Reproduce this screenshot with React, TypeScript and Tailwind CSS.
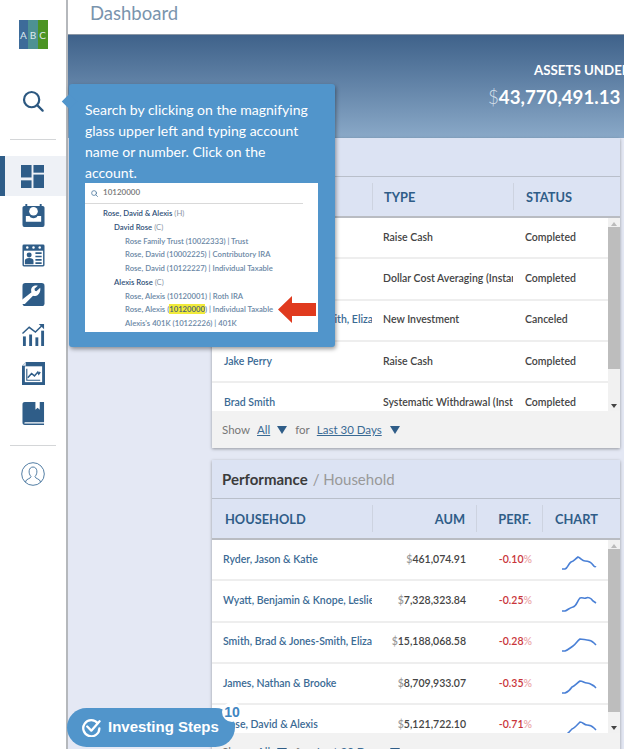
import React from 'react';

const navy = '#2f5d88';

const SearchIcon = ({ className }: { className?: string }) => (
  <svg viewBox="0 0 24 24" className={className} fill="none" stroke="currentColor" strokeWidth="2.4" strokeLinecap="round">
    <circle cx="10.5" cy="10.5" r="8.3" />
    <path d="M16.8 16.8L22.5 22.5" />
  </svg>
);

const Logo = () => (
  <div className="flex w-[29px] h-[29px] text-[10px] leading-[31px] text-center text-[#dfe9ee]">
    <div className="flex-1 bg-[#3d6b99]">A</div>
    <div className="flex-1 bg-[#4d9193]">B</div>
    <div className="flex-1 bg-[#4c9424]">C</div>
  </div>
);

const DashIcon = () => (
  <svg width="23" height="23" viewBox="0 0 24 24" fill={navy}>
    <rect x="0" y="0" width="11" height="13" />
    <rect x="0" y="16" width="11" height="8" />
    <rect x="13" y="0" width="11" height="8" />
    <rect x="13" y="10" width="11" height="14" />
  </svg>
);

const CalendarIcon = () => (
  <svg width="23" height="23" viewBox="0 0 24 24">
    <rect x="0.5" y="2" width="23" height="22" rx="2" fill={navy} />
    <rect x="3.5" y="0" width="2" height="4" fill={navy} />
    <rect x="18.5" y="0" width="2" height="4" fill={navy} />
    <circle cx="12" cy="7.5" r="4.5" fill="#fff" />
    <path d="M4 12.5h4c0 3 8 3 8 0h4v6H4z" fill="#fff" />
  </svg>
);

const ContactIcon = () => (
  <svg width="23" height="23" viewBox="0 0 24 24">
    <rect x="0.5" y="0.5" width="23" height="23" rx="1.5" fill={navy} />
    <circle cx="5.5" cy="3.6" r="1.3" fill="#fff" />
    <circle cx="12" cy="3.6" r="1.3" fill="#fff" />
    <circle cx="18.5" cy="3.6" r="1.3" fill="#fff" />
    <rect x="2" y="7" width="20" height="15" fill="#fff" />
    <circle cx="7.5" cy="11.5" r="2.6" fill={navy} />
    <path d="M3 21v-3.5c0-2 2-3 4.5-3s4.5 1 4.5 3V21z" fill={navy} />
    <path d="M14 9.5h6.5M14 13h6.5M14 16.5h6.5M14 20h6.5" stroke={navy} strokeWidth="1.7" />
  </svg>
);

const WrenchIcon = () => (
  <svg width="23" height="23" viewBox="0 0 24 24">
    <rect x="0.5" y="0" width="23" height="24" rx="3" fill={navy} />
    <path d="M19 5l-4 3.5-1.5-.5-.5-2 3.5-3.2c-3.5-1-7 1-7 4.7 0 1 .2 1.5.4 2.2L0 17.5 0 22l3 0 8.5-8.7c.8.3 1.5.4 2.3.3 3.5-.3 6-4.5 5.2-8.6z" fill="#fff" />
  </svg>
);

const GrowthIcon = () => (
  <svg width="23" height="23" viewBox="0 0 24 24" fill={navy}>
    <rect x="1" y="14" width="3" height="10" />
    <rect x="7.5" y="12" width="3" height="12" />
    <rect x="14" y="15" width="3" height="9" />
    <rect x="20" y="8" width="3" height="16" />
    <path d="M0.5 11L7.5 4.5l6.5 5L21 2.5" fill="none" stroke={navy} strokeWidth="1.5" />
    <path d="M17.5 1H23v5.5z" />
  </svg>
);

const ImageChartIcon = () => (
  <svg width="23" height="23" viewBox="0 0 24 24">
    <path d="M4 0h20v24H0V4z" fill={navy} />
    <rect x="3" y="4.5" width="18" height="16.5" fill="#fff" />
    <path d="M5 7v12h14" fill="none" stroke={navy} strokeWidth="1.2" />
    <path d="M6 16.5l4-4.500 3 2.500 3.500-4 1 2 1.500-2" fill="none" stroke={navy} strokeWidth="1.6" />
    <path d="M4 0v4H0z" fill="#dfe6ee" />
  </svg>
);

const BookIcon = () => (
  <svg width="23" height="23" viewBox="0 0 24 24" fill={navy}>
    <path d="M3 0h20v21H3.5c-1.500 0-1.500 1.500 0 1.500H23V24H3c-1.800 0-2.500-1-2.500-2.500V3C.5 1 1 0 3 0z" />
    <path d="M14 0h4.500v8l-2.200-2L14 8z" fill="#fff" />
  </svg>
);

const UserIcon = () => (
  <svg width="24" height="24" viewBox="0 0 24 24" fill="none" stroke="#3f6f9a" strokeWidth="0.9">
    <circle cx="12" cy="12" r="11.3" />
    <path d="M4.500 20c.2-3.500 5.500-3 5.500-5.500-3-3-2.500-9.500 2-9.500s5 6.500 2 9.500c0 2.500 5.300 2 5.500 5.500" />
  </svg>
);

const navItems = [
  <CalendarIcon key="calendar" />,
  <ContactIcon key="contact" />,
  <WrenchIcon key="wrench" />,
  <GrowthIcon key="growth" />,
  <ImageChartIcon key="image" />,
  <BookIcon key="book" />,
];

const Sidebar = () => (
  <aside className="w-[68px] shrink-0 h-full bg-white border-r-2 border-[#b5b8bc] flex flex-col items-center pt-5">
    <Logo />
    <SearchIcon className="w-[22px] h-[22px] text-[#2c5880] mt-[41px]" />
    <div className="w-[46px] h-px bg-[#d4d6d8] mt-[27px]" />
    <div className="w-full h-10 mt-[16px] flex items-center bg-[#eef1f6]">
      <div className="w-[5px] h-full bg-[#2f5d88]" />
      <div className="ml-[16px]"><DashIcon /></div>
    </div>
    <div className="flex flex-col gap-[16.5px] mt-[8px]">{navItems}</div>
    <div className="w-[46px] h-px bg-[#d4d6d8] mt-[20px]" />
    <div className="mt-[16px]"><UserIcon /></div>
  </aside>
);

const Caret = () => (
  <svg width="10" height="8" viewBox="0 0 10 8"><path d="M0 0h10L5 8z" fill={navy} /></svg>
);

const Footer = () => (
  <div className="h-[37px] bg-[#f2f2f2] flex items-center pl-[10px] pt-[1px] text-[11.5px] text-[#777]">
    Show
    <span className="ml-[7px] text-[#3a6a94] underline">All</span>
    <span className="ml-[7px]"><Caret /></span>
    <span className="ml-[8px]">for</span>
    <span className="ml-[7px] text-[#3a6a94] underline">Last 30 Days</span>
    <span className="ml-[8px]"><Caret /></span>
  </div>
);

const Scrollbar = ({ top, height }: { top: number; height: number }) => (
  <div className="w-3 shrink-0 bg-[#f1f1f1] flex flex-col items-center relative">
    <svg width="6" height="4" viewBox="0 0 6 4" className="mt-1"><path d="M0 4h6L3 0z" fill="#bbb" /></svg>
    <div className="w-full bg-[#bdbdbd] absolute" style={{ top, height }} />
    <svg width="6" height="4" viewBox="0 0 6 4" className="absolute bottom-[3px]"><path d="M0 0h6L3 4z" fill="#444" /></svg>
  </div>
);

const activity = [
  ['Nathan Ryder', 'Raise Cash', 'Completed'],
  ['Leslie Wyatt', 'Dollar Cost Averaging (Instant)', 'Completed'],
  ['Smith, Brad & Jones-Smith, Eliza', 'New Investment', 'Canceled'],
  ['Jake Perry', 'Raise Cash', 'Completed'],
  ['Brad Smith', 'Systematic Withdrawal (Instant)', 'Completed'],
];

const ActivityCard = () => (
  <section className="bg-white shadow-[0_1px_3px_rgba(0,0,0,0.35)] overflow-hidden">
    <div className="h-[39px] bg-[#dce3f3] border-b border-[#b9bfca] px-[10px] flex items-center text-[15.5px] font-bold text-[#3b3b3b]">Activity</div>
    <div className="h-[41px] bg-[#dce3f3] border-b-2 border-[#b9bcc2] flex items-center text-[12.8px] font-bold text-[#2f5d88]">
      <div className="w-[160px] pl-[12px] pt-[2px]">NAME</div>
      <div className="w-[141px] pl-[11px] pt-[2px] h-[27px] flex items-center border-l border-[#cdd3e0]">TYPE</div>
      <div className="flex-1 pl-[12px] pt-[2px] h-[27px] flex items-center border-l border-[#cdd3e0]">STATUS</div>
    </div>
    <div className="flex h-[193px]">
      <div className="flex-1 min-w-0 overflow-hidden">
        {activity.map((row) => (
          <div key={row[0]} className="h-[41.3px] shrink-0 border-b-2 border-[#eeeeee] flex items-center text-[10.5px] font-semibold whitespace-nowrap">
            <div className="w-[160px] pl-[12px] overflow-hidden text-[#3a6a94]">{row[0]}</div>
            <div className="w-[141px] pl-[11px] overflow-hidden text-[#444]">{row[1]}</div>
            <div className="flex-1 pl-[12px] text-[#444]">{row[2]}</div>
          </div>
        ))}
      </div>
      <Scrollbar top={9} height={142} />
    </div>
    <Footer />
  </section>
);

const performance = [
  { name: 'Ryder, Jason & Katie', aum: '461,074.91', perf: '-0.10', line: 'M0 14h3c3-1 3-5 6-7 3-1 4-3 7-5 3 1 4 4 7 4s6 1 8 4 2 1 3 2' },
  { name: 'Wyatt, Benjamin & Knope, Leslie', aum: '7,328,323.84', perf: '-0.25', line: 'M0 15h3c3-1 4-3 8-4s4-6 7-9c3-1 4 1 6 0s5 0 7 3l3 2' },
  { name: 'Smith, Brad & Jones-Smith, Eliza', aum: '15,188,068.58', perf: '-0.28', line: 'M0 14h3c3-1 5-3 8-5 3-2 4-5 7-7 3 0 5 1 7 1s5 1 7 3l2 2' },
  { name: 'James, Nathan & Brooke', aum: '8,709,933.07', perf: '-0.35', line: 'M0 14h3c3-1 5-3 7-6 3-1 5-4 8-6 3 0 4 2 7 2s5 2 7 3l2 2' },
  { name: 'Rose, David & Alexis', aum: '5,121,722.10', perf: '-0.71', line: 'M0 15h3c3-1 5-4 7-6 3-1 5-4 8-7 3 0 4 3 7 3s5 1 7 3l2 2' },
];

const PerformanceCard = () => (
  <section className="bg-white shadow-[0_1px_3px_rgba(0,0,0,0.35)] mt-[12px] overflow-hidden">
    <div className="h-[39px] bg-[#dce3f3] border-b border-[#b9bfca] px-[10px] flex items-center text-[15px]">
      <span className="font-bold text-[#3b3b3b]">Performance</span>
      <span className="ml-[5px] text-[#999]">/ Household</span>
    </div>
    <div className="h-[41px] bg-[#dce3f3] border-b-2 border-[#b9bcc2] flex items-center text-[12.8px] font-bold text-[#2f5d88]">
      <div className="w-[160px] pl-[13px] pt-[2px]">HOUSEHOLD</div>
      <div className="w-[104px] pr-[11px] pt-[2px] h-[27px] flex items-center justify-end border-l border-[#cdd3e0]">AUM</div>
      <div className="w-[66px] pr-[11px] pt-[2px] h-[27px] flex items-center justify-end border-l border-[#cdd3e0]">PERF.</div>
      <div className="flex-1 pl-[12px] pt-[2px] h-[27px] flex items-center border-l border-[#cdd3e0]">CHART</div>
    </div>
    <div className="flex h-[193px]">
      <div className="flex-1 min-w-0 overflow-hidden">
        {performance.map((row) => (
          <div key={row.name} className="h-[41.3px] border-b-2 border-[#eeeeee] flex items-center text-[10.5px] font-semibold whitespace-nowrap">
            <div className="w-[160px] pl-[11px] overflow-hidden text-[#3a6a94]">{row.name}</div>
            <div className="w-[94px] text-right text-[#444]"><span className="text-[#999]">$</span>{row.aum}</div>
            <div className="w-[66px] text-right text-[#c9353a]">{row.perf}<span className="text-[#eba9ab]">%</span></div>
            <svg width="36" height="18" viewBox="0 0 36 18" className="ml-[30px] mt-[8px]" fill="none" stroke="#4a80d6" strokeWidth="1.6">
              <path d={row.line} />
            </svg>
          </div>
        ))}
      </div>
      <Scrollbar top={9} height={163} />
    </div>
    <Footer />
  </section>
);

const lines = [
  { pad: 'pl-[18px]', bold: true, text: 'Rose, David & Alexis', tag: '(H)' },
  { pad: 'pl-[29px]', bold: true, text: 'David Rose', tag: '(C)' },
  { pad: 'pl-[40px]', text: 'Rose Family Trust (10022333) | Trust' },
  { pad: 'pl-[40px]', text: 'Rose, David (10002225) | Contributory IRA' },
  { pad: 'pl-[40px]', text: 'Rose, David (10122227) | Individual Taxable' },
  { pad: 'pl-[29px]', bold: true, text: 'Alexis Rose', tag: '(C)' },
  { pad: 'pl-[40px]', text: 'Rose, Alexis (10120001) | Roth IRA' },
];

const Tooltip = () => (
  <div className="absolute left-[69px] top-[84px] w-[266px] h-[263px] bg-[#5195cb] rounded-[3px] shadow-[1px_2px_4px_rgba(0,0,0,0.4)] pt-[15px] pl-[16px]">
    <div className="absolute -left-[5px] top-[12px] w-[11px] h-[11px] rotate-45 bg-[#5195cb]" />
    <p className="w-[226px] text-[14px] leading-[21px] text-white">
      Search by clicking on the magnifying glass upper left and typing account name or number. Click on the account.
    </p>
    <div className="w-[233px] h-[149px] bg-white relative font-semibold text-[7.7px] leading-[13.75px] text-[#6a87a5] whitespace-nowrap">
      <div className="h-[21px] w-[218px] border-b border-[#d9d9d9] flex items-center pl-[6px] text-[8px] text-[#777]">
        <SearchIcon className="w-[7px] h-[7px] text-[#3b6a94] mr-[5px]" />
        <span>10120000</span>
      </div>
      <div className="pt-[3px]">
        {lines.map((l) => (
          <div key={l.text} className={`${l.pad} ${l.bold ? 'text-[#2f5078]' : ''}`}>
            {l.text}
            {l.tag && <span className="text-[#8a96a5] font-normal"> {l.tag}</span>}
          </div>
        ))}
        <div className="pl-[40px]">
          Rose, Alexis (<span className="bg-[#f1ea3a] text-[#4a5f75]">10120000</span>) | Individual Taxable
        </div>
        <div className="pl-[40px]">Alexis's 401K (10122226) | 401K</div>
      </div>
      <svg width="38" height="27" viewBox="0 0 38 27" className="absolute left-[193px] top-[113px]">
        <path d="M0 13.5L14 0v7h24v13H14v7z" fill="#e03a1e" />
      </svg>
    </div>
  </div>
);

const InvestingSteps = () => (
  <div className="absolute left-[67px] top-[708px] w-[168px] h-[39px] rounded-full bg-[#5195cb] flex items-center pl-[15px] font-['Liberation_Sans',sans-serif] text-[15px] font-bold text-white">
    <svg width="19" height="19" viewBox="0 0 20 20" fill="none" stroke="#fff" strokeWidth="2.4" strokeLinecap="round" strokeLinejoin="round">
      <path d="M16.5 5.5A8.5 8.5 0 1 0 18.3 11" />
      <path d="M5.5 9l4.3 4.3L18.500 3.500" />
    </svg>
    <span className="ml-[7px]">Investing Steps</span>
    <div className="absolute left-[155px] -top-[6px] w-[20px] h-[20px] rounded-full bg-white flex items-center justify-center text-[14px] text-[#3f86c2]">10</div>
  </div>
);

export default function App() {
  return (
    <div className="relative flex w-[624px] h-[749px] overflow-hidden bg-white font-['Lato',sans-serif]">
      <Sidebar />
      <main className="flex-1 min-w-0 flex flex-col bg-[#e4e8f4]">
        <header className="h-[35px] shrink-0 bg-white border-b border-[#8b97a5] pl-[22px] pb-[7px] flex items-center text-[18.5px] text-[#7a94ad]">
          Dashboard
        </header>
        <div className="h-[103px] shrink-0 bg-gradient-to-b from-[#3f628a] to-[#8aa9c8] pl-[464px] pt-[26px] whitespace-nowrap text-white">
          <div className="text-[13.3px] font-bold leading-[18px] pl-[2px]">ASSETS UNDER MANAGEMENT</div>
          <div className="text-[18.7px] leading-[26px] mt-[5px] -ml-[44px]">
            <span className="font-light text-[#d4dfe9]">$</span><span className="font-bold">43,770,491.13</span>
          </div>
        </div>
        <div className="pl-[144px] pr-[4px]">
          <ActivityCard />
          <PerformanceCard />
        </div>
      </main>
      <Tooltip />
      <InvestingSteps />
    </div>
  );
}
